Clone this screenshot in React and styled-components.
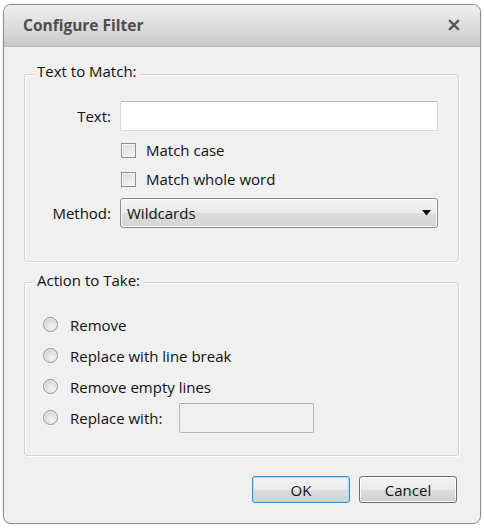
import React from "react";
import styled, { createGlobalStyle } from "styled-components";

const Global = createGlobalStyle`
  html, body {
    margin: 0;
    padding: 0;
    background: #ffffff;
  }
  body {
    font-family: "Open Sans", "Noto Sans", "Liberation Sans", sans-serif;
    font-size: 15px;
    color: #111111;
  }
`;

const Page = styled.div`
  padding: 4px 3px;
`;

const Dialog = styled.div`
  width: 478px;
  height: 520px;
  box-sizing: border-box;
  border: 1px solid #8e8e8e;
  border-radius: 8px;
  background: #f0f0f0;
  box-shadow: 0 0 2px rgba(0, 0, 0, 0.15);
  display: flex;
  flex-direction: column;
  overflow: hidden;
`;

const TitleBar = styled.div`
  height: 41px;
  flex: none;
  display: flex;
  align-items: center;
  justify-content: space-between;
  padding: 0 20px 0 19px;
  background: linear-gradient(#efefef, #d9d9d9 60%, #c9c9c9);
  border-bottom: 1px solid #bdbdbd;
`;

const Title = styled.span`
  font-weight: 700;
  font-size: 15.5px;
  color: #4d4d4d;
  margin-top: -1px;
`;

const Close = styled.button`
  border: none;
  background: none;
  padding: 0;
  width: 12px;
  height: 12px;
  display: flex;
  margin-top: -2px;
`;

const Body = styled.div`
  flex: 1;
  display: flex;
  flex-direction: column;
  padding: 27px 21px 20px 20px;
`;

const Group = styled.div`
  position: relative;
  border: 1px solid #d3d3d3;
  border-radius: 3px;
  box-shadow: inset 1px 1px 0 #ffffff, 1px 1px 0 #ffffff;
  padding: ${(p) => p.$pad};
  margin-bottom: ${(p) => p.$mb || "0"};
`;

const Legend = styled.span`
  position: absolute;
  left: 9px;
  top: ${(p) => p.$top || "-14px"};
  padding: 0 3px;
  background: #f0f0f0;
  line-height: 20px;
`;

const FormGrid = styled.div`
  display: grid;
  grid-template-columns: 86px 318px;
  column-gap: 9px;
  row-gap: 9px;
  align-items: center;
`;

const Label = styled.label`
  text-align: right;
`;

const TextInput = styled.input`
  box-sizing: border-box;
  height: 30px;
  width: ${(p) => p.$w || "100%"};
  border: 1px solid #d6d9dd;
  border-top-color: #b5b8bd;
  border-radius: 2px;
  background: ${(p) => (p.$dim ? "#f0f0f0" : "#ffffff")};
  ${(p) => p.$dim && "border-color: #b9b9b9; border-top-color: #a9a9a9;"}
  font: inherit;
  padding: 0 5px;
  outline: none;
`;

const Check = styled.label`
  grid-column: 2;
  height: 20px;
  display: flex;
  align-items: center;
  gap: 10px;
`;

const Box = styled.span`
  width: 15px;
  height: 15px;
  border: 1px solid #8f8f8f;
  box-sizing: border-box;
  margin-left: 1px;
  background: linear-gradient(135deg, #d8d8d8, #f8f8f8);
  box-shadow: inset 0 0 0 1px #f4f4f4;
`;

const Select = styled.div`
  box-sizing: border-box;
  height: 30px;
  border: 1px solid #8a8a8a;
  border-radius: 3px;
  background: linear-gradient(#f4f4f4, #ebebeb 50%, #dcdcdc 51%, #d6d6d6);
  box-shadow: inset 0 0 0 1px #fbfbfb;
  display: flex;
  align-items: center;
  justify-content: space-between;
  padding: 0 6px 0 6px;
`;

const RadioList = styled.div`
  display: flex;
  flex-direction: column;
`;

const RadioRow = styled.label`
  height: 31px;
  display: flex;
  align-items: center;
`;

const Radio = styled.span`
  width: 15px;
  height: 15px;
  box-sizing: border-box;
  border-radius: 50%;
  border: 1px solid #959595;
  background: radial-gradient(circle at 60% 65%, #f6f6f6, #d2d2d2 70%);
  box-shadow: inset 0 0 0 1px #efefef;
  margin-right: 12px;
`;

const RadioText = styled.span`
  margin-right: ${(p) => p.$mr || "0"};
`;

const Buttons = styled.div`
  display: flex;
  justify-content: flex-end;
  gap: 9px;
  margin-top: auto;
  padding-right: 2px;
`;

const Button = styled.button`
  width: 98px;
  height: 27px;
  box-sizing: border-box;
  font: inherit;
  color: #111111;
  border-radius: 3px;
  border: 1px solid ${(p) => (p.$primary ? "#3c8ccb" : "#707070")};
  background: linear-gradient(#f3f3f3, #ebebeb 50%, #dddddd 51%, #d0d0d0);
  box-shadow: inset 0 0 0 1px ${(p) => (p.$primary ? "#a8dcf3" : "#fbfbfb")};
  padding: 0;
`;

function App() {
  return (
    <>
      <Global />
      <Page>
        <Dialog>
          <TitleBar>
            <Title>Configure Filter</Title>
            <Close aria-label="Close">
              <svg width="12" height="12" viewBox="0 0 12 12">
                <path
                  d="M2 2 L10 10 M10 2 L2 10"
                  stroke="#555"
                  strokeWidth="2.4"
                  strokeLinecap="square"
                />
              </svg>
            </Close>
          </TitleBar>
          <Body>
            <Group $pad="26px 20px 33px 0" $mb="20px">
              <Legend>Text to Match:</Legend>
              <FormGrid>
                <Label>Text:</Label>
                <TextInput />
                <Check>
                  <Box />
                  Match case
                </Check>
                <Check>
                  <Box />
                  Match whole word
                </Check>
                <Label>Method:</Label>
                <Select>
                  <span>Wildcards</span>
                  <svg width="9" height="6" viewBox="0 0 9 6">
                    <path d="M0 0 H9 L4.5 5.5 Z" fill="#111" />
                  </svg>
                </Select>
              </FormGrid>
            </Group>
            <Group $pad="26px 18px 22px 18px">
              <Legend $top="-13px">Action to Take:</Legend>
              <RadioList>
                <RadioRow>
                  <Radio />
                  <RadioText>Remove</RadioText>
                </RadioRow>
                <RadioRow>
                  <Radio />
                  <RadioText>Replace with line break</RadioText>
                </RadioRow>
                <RadioRow>
                  <Radio />
                  <RadioText>Remove empty lines</RadioText>
                </RadioRow>
                <RadioRow>
                  <Radio />
                  <RadioText $mr="17px">Replace with:</RadioText>
                  <TextInput $dim $w="135px" />
                </RadioRow>
              </RadioList>
            </Group>
            <Buttons>
              <Button $primary>OK</Button>
              <Button>Cancel</Button>
            </Buttons>
          </Body>
        </Dialog>
      </Page>
    </>
  );
}

export default App;
